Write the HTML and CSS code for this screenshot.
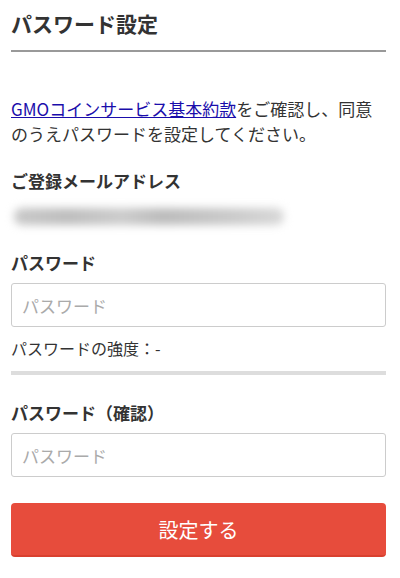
FILE: index.html
```html
<!DOCTYPE html>
<html lang="ja">
<head>
    <meta charset="UTF-8">
    <meta name="viewport" content="width=device-width, initial-scale=1.0">
    <title>パスワード設定</title>
    <link rel="stylesheet" href="styles.css">
</head>
<body>
    <div class="page">
        <h1 class="title">パスワード設定</h1>

        <p class="intro"><a href="#">GMOコインサービス基本約款</a>をご確認し、同意のうえパスワードを設定してください。</p>

        <div class="label">ご登録メールアドレス</div>
        <div class="email"><span class="email-blur"></span></div>

        <div class="label label-pw">パスワード</div>
        <input class="field" type="password" placeholder="パスワード">
        <div class="strength">パスワードの強度：-</div>
        <div class="strength-bar"></div>

        <div class="label label-confirm">パスワード（確認）</div>
        <input class="field" type="password" placeholder="パスワード">

        <button class="submit" type="button">設定する</button>
    </div>
</body>
</html>
```

FILE: styles.css
```css
body {
    margin: 0;
    padding: 0;
    background: #fff;
    color: #333;
    font-family: "Noto Sans CJK JP", "Noto Sans", sans-serif;
}
.page {
    width: 375px;
    padding: 0 14px 0 11px;
}
.title {
    margin: 0;
    padding-top: 8px;
    padding-bottom: 12px;
    font-size: 21px;
    line-height: 30px;
    font-weight: bold;
    color: #333;
    border-bottom: 2px solid #999;
}
.intro {
    margin: 44px 0 0;
    font-size: 17px;
    line-height: 25px;
    color: #333;
}
.intro a {
    color: #1a0dab;
    text-decoration: underline;
}
.label {
    margin-top: 28px;
    font-size: 17px;
    line-height: 22px;
    font-weight: bold;
    color: #333;
}
.intro + .label {
    margin-top: 24px;
}
.email {
    height: 34px;
    display: flex;
    align-items: center;
    margin-top: 7px;
}
.email-blur {
    display: block;
    width: 270px;
    height: 17px;
    margin-left: 3px;
    border-radius: 8px;
    background: linear-gradient(90deg, #c8c8c8, #bdbdbd 20%, #cbcbcb 40%, #bbbbbb 55%, #c9c9c9 80%, #d8d8d8);
    filter: blur(4px);
}
.label-pw {
    margin-top: 19px;
}
.field {
    display: block;
    box-sizing: border-box;
    width: 375px;
    height: 44px;
    margin-top: 9px;
    padding: 0 10px;
    border: 1px solid #ccc;
    border-radius: 3px;
    font-family: inherit;
    font-size: 17px;
    color: #333;
    outline: none;
}
.field::placeholder {
    color: #aaa;
}
.strength {
    margin-top: 11px;
    font-size: 16px;
    line-height: 20px;
    color: #333;
}
.strength-bar {
    height: 4px;
    margin-top: 13px;
    background: #ddd;
}
.label-confirm {
    margin-top: 27px;
}
.submit {
    display: block;
    width: 375px;
    height: 54px;
    margin-top: 26px;
    border: none;
    border-bottom: 2px solid #d9402f;
    border-radius: 4px;
    background: #e74c3c;
    color: #fff;
    font-family: inherit;
    font-size: 20px;
}
```
